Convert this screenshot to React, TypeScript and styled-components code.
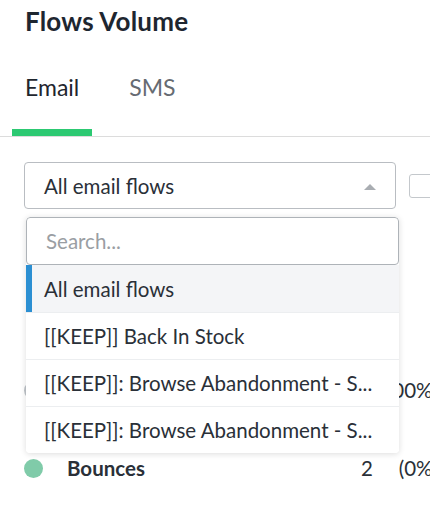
import React from "react";
import styled, { createGlobalStyle } from "styled-components";

const GlobalStyle = createGlobalStyle`
  html, body {
    margin: 0;
    padding: 0;
    background: #ffffff;
    overflow: hidden;
  }
  body {
    font-family: Lato, "Liberation Sans", sans-serif;
    color: #222a33;
  }
`;

const Page = styled.div`
  width: 460px;
  height: 512px;
  position: relative;
`;

const Title = styled.h2`
  margin: 0;
  padding: 5px 0 0 25px;
  font-size: 26px;
  font-weight: 700;
  line-height: 32px;
  color: #1e2630;
  letter-spacing: 0.2px;
`;

const TabBar = styled.div`
  display: flex;
  margin-top: 34px;
  padding-left: 12px;
  border-bottom: 1px solid #dcdcdc;
  width: 418px;
`;

const Tab = styled.div<{ active?: boolean }>`
  padding: 0 13px 26px;
  font-size: 23px;
  line-height: 32px;
  color: ${p => (p.active ? "#1f262e" : "#666b72")};
  border-bottom: 7px solid ${p => (p.active ? "#2cc972" : "transparent")};
  margin-right: 24px;
`;

const FilterRow = styled.div`
  display: flex;
  align-items: center;
  gap: 13px;
  margin: 25px 0 0 24px;
`;

const Select = styled.div`
  box-sizing: border-box;
  width: 372px;
  height: 47px;
  border: 1px solid #b9bdc2;
  border-radius: 4px;
  display: flex;
  align-items: center;
  justify-content: space-between;
  padding: 0 19px 0 19px;
  font-size: 20.5px;
  color: #2a3038;
`;

const Caret = styled.span`
  width: 0;
  height: 0;
  margin-top: 2px;
  border-left: 6px solid transparent;
  border-right: 6px solid transparent;
  border-bottom: 6px solid #a9adb2;
`;

const Checkbox = styled.div`
  box-sizing: border-box;
  width: 24px;
  height: 24px;
  border: 1px solid #c4c8cc;
  border-radius: 3px;
  flex-shrink: 0;
`;

const Menu = styled.div`
  position: absolute;
  top: 217px;
  left: 26px;
  width: 373px;
  background: #ffffff;
  border-radius: 4px;
  box-shadow: 0 1px 6px rgba(0, 0, 0, 0.14);
  overflow: hidden;
`;

const Search = styled.div`
  box-sizing: border-box;
  height: 48px;
  border: 1px solid #aeb3b8;
  border-radius: 4px;
  display: flex;
  align-items: center;
  padding-left: 19px;
  font-size: 20.5px;
  color: #9a9ea3;
`;

const Option = styled.div<{ selected?: boolean }>`
  box-sizing: border-box;
  height: 47px;
  display: flex;
  align-items: center;
  padding-left: ${p => (p.selected ? "12px" : "18px")};
  font-size: 20.5px;
  color: #2a3038;
  white-space: nowrap;
  background: ${p => (p.selected ? "#f4f5f7" : "#ffffff")};
  border-left: ${p => (p.selected ? "6px solid #2b8fd2" : "none")};
  & + & {
    border-top: 1px solid #eceef0;
  }
`;

const Stats = styled.div`
  margin-top: 162px;
  display: flex;
  flex-direction: column;
  gap: 40px;
`;

const StatRow = styled.div`
  display: flex;
  align-items: center;
  height: 38px;
  padding-left: 24px;
`;

const Dot = styled.span<{ color: string }>`
  width: 19px;
  height: 19px;
  border-radius: 50%;
  background: ${p => p.color};
  flex-shrink: 0;
`;

const Label = styled.span`
  margin-left: 24px;
  width: 200px;
  font-size: 20.5px;
  font-weight: 700;
  color: #2a3038;
`;

const Count = styled.span`
  width: 106px;
  text-align: right;
  font-size: 20.5px;
  color: #2a3038;
`;

const Percent = styled.span`
  width: 65px;
  text-align: right;
  font-size: 20.5px;
  color: #2a3038;
`;

const options = [
  "[[KEEP]] Back In Stock",
  "[[KEEP]]: Browse Abandonment - S...",
  "[[KEEP]]: Browse Abandonment - S...",
];

const stats = [
  { label: "Delivered", count: "1,204", pct: "(100%)", color: "#bfc4c9" },
  { label: "Bounces", count: "2", pct: "(0%)", color: "#80cba9" },
];

export default function App() {
  return (
    <Page>
      <GlobalStyle />
      <Title>Flows Volume</Title>
      <TabBar>
        <Tab active>Email</Tab>
        <Tab>SMS</Tab>
      </TabBar>
      <FilterRow>
        <Select>
          All email flows
          <Caret />
        </Select>
        <Checkbox />
      </FilterRow>
      <Stats>
        {stats.map(s => (
          <StatRow key={s.label}>
            <Dot color={s.color} />
            <Label>{s.label}</Label>
            <Count>{s.count}</Count>
            <Percent>{s.pct}</Percent>
          </StatRow>
        ))}
      </Stats>
      <Menu>
        <Search>Search...</Search>
        <Option selected>All email flows</Option>
        {options.map((o, i) => (
          <Option key={i}>{o}</Option>
        ))}
      </Menu>
    </Page>
  );
}
